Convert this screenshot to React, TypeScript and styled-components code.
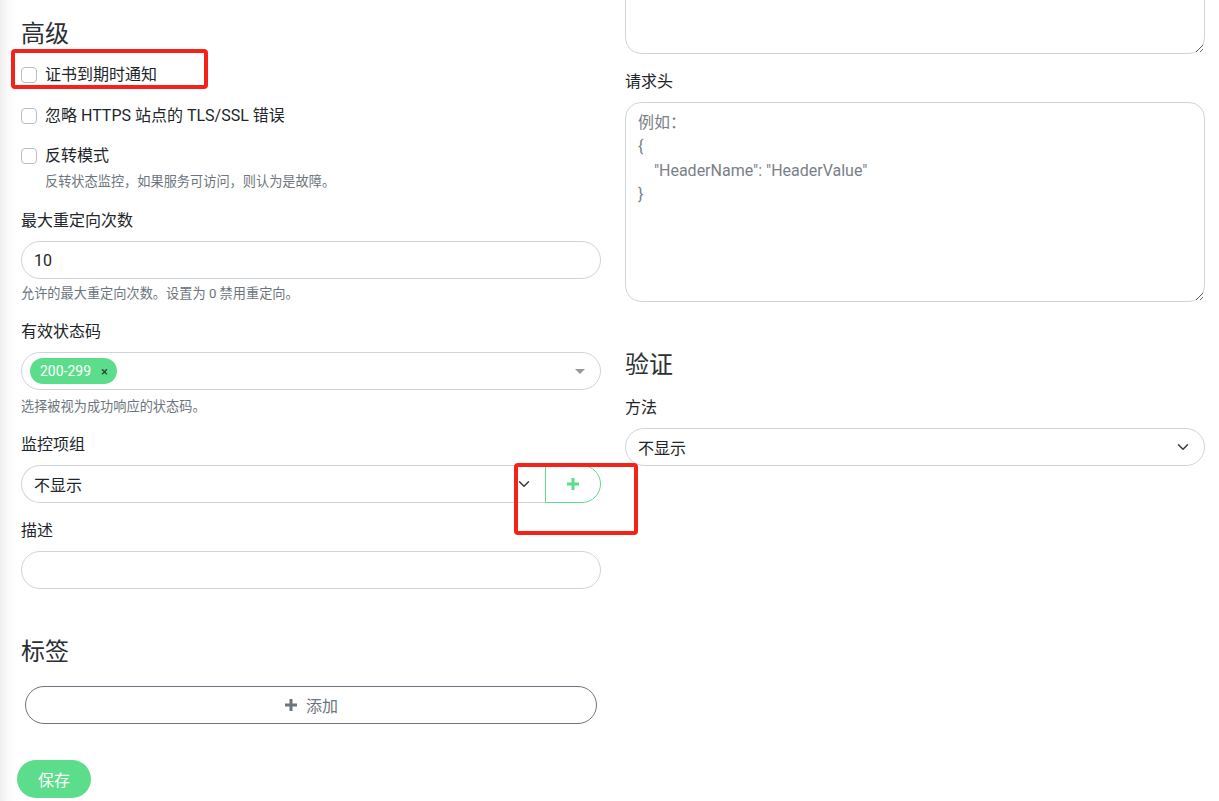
import React from "react";
import styled, { createGlobalStyle } from "styled-components";

const Global = createGlobalStyle`
  html, body { margin: 0; padding: 0; }
  body {
    background: linear-gradient(90deg, #efefef 0, #fafafa 8px, #ffffff 16px);
    font-family: "Segoe UI", Roboto, "Noto Sans CJK SC", sans-serif;
    color: #212529;
    overflow: hidden;
  }
  * { box-sizing: border-box; }
`;

const Page = styled.div`
  position: relative;
  width: 1219px;
  height: 801px;
  overflow: hidden;
  padding-left: 21px;
`;

const Grid = styled.div`
  display: grid;
  grid-template-columns: 580px 580px;
  column-gap: 24px;
  align-items: start;
`;

const Column = styled.div<{ $offset?: number }>`
  display: flex;
  flex-direction: column;
  margin-top: ${(p) => p.$offset ?? 0}px;
`;

const Heading = styled.h2<{ $mt: number }>`
  margin: ${(p) => p.$mt}px 0 0;
  font-size: 24px;
  line-height: 29px;
  font-weight: 400;
  color: #2b2f33;
`;

const CheckRow = styled.label<{ $mt: number }>`
  display: flex;
  align-items: center;
  gap: 8px;
  margin-top: ${(p) => p.$mt}px;
  font-size: 16px;
  line-height: 24px;
  color: #212529;
`;

const Check = styled.input.attrs({ type: "checkbox" })`
  appearance: none;
  margin: 0;
  width: 16px;
  height: 16px;
  border: 1px solid #b9bdc1;
  border-radius: 4px;
  background: #fff;
`;

const Help = styled.div<{ $mt: number; $indent?: number }>`
  margin-top: ${(p) => p.$mt}px;
  padding-left: ${(p) => p.$indent ?? 0}px;
  font-size: 13.2px;
  line-height: 20px;
  color: #6c757d;
`;

const Label = styled.div<{ $mt: number }>`
  margin-top: ${(p) => p.$mt}px;
  margin-bottom: 8px;
  font-size: 16px;
  line-height: 24px;
  color: #212529;
`;

const TextInput = styled.input`
  height: 38px;
  width: 100%;
  border: 1px solid #ced4da;
  border-radius: 50rem;
  padding: 0 12px;
  font: inherit;
  font-size: 16px;
  color: #212529;
  background: #fff;
  outline: none;
`;

const MultiBox = styled.div`
  height: 38px;
  border: 1px solid #ced4da;
  border-radius: 50rem;
  display: flex;
  align-items: center;
  padding: 0 15px 0 8px;
  background: #fff;
`;

const Tag = styled.span`
  display: inline-flex;
  align-items: center;
  gap: 10px;
  height: 26px;
  padding: 0 9px 0 10px;
  border-radius: 50rem;
  background: #5cdd8b;
  color: #fff;
  font-size: 14px;
`;

const TagClose = styled.span`
  color: #1f3a2b;
  font-size: 13px;
  line-height: 1;
`;

const Caret = styled.span`
  margin-left: auto;
  width: 0;
  height: 0;
  border-left: 5px solid transparent;
  border-right: 5px solid transparent;
  border-top: 5px solid #999;
`;

const SelectBox = styled.div<{ $group?: boolean }>`
  flex: ${(p) => (p.$group ? "1 1 auto" : "0 0 auto")};
  height: 38px;
  display: flex;
  align-items: center;
  justify-content: space-between;
  padding: 0 15px 0 12px;
  border: 1px solid #ced4da;
  border-right-width: ${(p) => (p.$group ? 0 : 1)}px;
  border-radius: ${(p) => (p.$group ? "50rem 0 0 50rem" : "50rem")};
  font-size: 16px;
  color: #212529;
  background: #fff;
`;

const InputGroup = styled.div`
  display: flex;
`;

const GroupButton = styled.button`
  width: 56px;
  height: 38px;
  border: 1px solid #5cdd8b;
  border-radius: 0 50rem 50rem 0;
  background: #fff;
  display: flex;
  align-items: center;
  justify-content: center;
  padding: 0;
`;

const AddButton = styled.button`
  margin: 19px 4px 0;
  height: 38px;
  border: 1px solid #6c757d;
  border-radius: 50rem;
  background: #fff;
  color: #6c757d;
  font: inherit;
  font-size: 16px;
  display: flex;
  align-items: center;
  justify-content: center;
  gap: 8px;
`;

const TextArea = styled.textarea<{ $mt: number; $h: number }>`
  margin-top: ${(p) => p.$mt}px;
  height: ${(p) => p.$h}px;
  width: 100%;
  border: 1px solid #ced4da;
  border-radius: 16px;
  padding: 8px 12px;
  font: inherit;
  font-size: 16px;
  line-height: 24px;
  white-space: pre-wrap;
  outline: none;
  &::placeholder { color: #7a8087; }
`;

const SaveBar = styled.div`
  margin-top: 36px;
  margin-left: -4px;
`;

const SaveButton = styled.button`
  height: 38px;
  padding: 0 21px;
  border: none;
  border-radius: 50rem;
  background: #5cdd8b;
  color: #fff;
  font: inherit;
  font-size: 16px;
`;

const Mark = styled.div<{ $x: number; $y: number; $w: number; $h: number }>`
  position: absolute;
  left: ${(p) => p.$x}px;
  top: ${(p) => p.$y}px;
  width: ${(p) => p.$w}px;
  height: ${(p) => p.$h}px;
  border: 4px solid #f5221a;
  border-radius: 4px;
  pointer-events: none;
`;

const Chevron = () => (
  <svg width="12" height="12" viewBox="0 0 16 16">
    <path d="m2 5 6 6 6-6" fill="none" stroke="#343a40" strokeWidth="2" strokeLinecap="round" strokeLinejoin="round" />
  </svg>
);

const Plus = ({ color }: { color: string }) => (
  <svg width="14" height="14" viewBox="0 0 14 14">
    <path d="M7 1v12M1 7h12" stroke={color} strokeWidth="3" />
  </svg>
);

export default function App() {
  return (
    <>
      <Global />
      <Page>
        <Grid>
          <Column>
            <Heading $mt={20}>高级</Heading>
            <CheckRow $mt={14}>
              <Check />
              证书到期时通知
            </CheckRow>
            <CheckRow $mt={17}>
              <Check />
              忽略 HTTPS 站点的 TLS/SSL 错误
            </CheckRow>
            <CheckRow $mt={16}>
              <Check />
              反转模式
            </CheckRow>
            <Help $mt={4} $indent={24}>反转状态监控，如果服务可访问，则认为是故障。</Help>

            <Label $mt={17}>最大重定向次数</Label>
            <TextInput defaultValue="10" />
            <Help $mt={5}>允许的最大重定向次数。设置为 0 禁用重定向。</Help>

            <Label $mt={16}>有效状态码</Label>
            <MultiBox>
              <Tag>
                200-299
                <TagClose>×</TagClose>
              </Tag>
              <Caret />
            </MultiBox>
            <Help $mt={7}>选择被视为成功响应的状态码。</Help>

            <Label $mt={16}>监控项组</Label>
            <InputGroup>
              <SelectBox $group>
                不显示
                <Chevron />
              </SelectBox>
              <GroupButton>
                <Plus color="#5cdd8b" />
              </GroupButton>
            </InputGroup>

            <Label $mt={16}>描述</Label>
            <TextInput />

            <Heading $mt={49}>标签</Heading>
            <AddButton>
              <Plus color="#6c757d" />
              添加
            </AddButton>
          </Column>

          <Column $offset={-60}>
            <TextArea $mt={0} $h={114} />
            <Label $mt={16}>请求头</Label>
            <TextArea
              $mt={0}
              $h={200}
              placeholder={'例如：\n{\n    "HeaderName": "HeaderValue"\n}'}
            />
            <Heading $mt={49}>验证</Heading>
            <Label $mt={16}>方法</Label>
            <SelectBox>
              不显示
              <Chevron />
            </SelectBox>
          </Column>
        </Grid>
        <SaveBar>
          <SaveButton>保存</SaveButton>
        </SaveBar>
        <Mark $x={11} $y={49} $w={197} $h={40} />
        <Mark $x={514} $y={463} $w={124} $h={72} />
      </Page>
    </>
  );
}
